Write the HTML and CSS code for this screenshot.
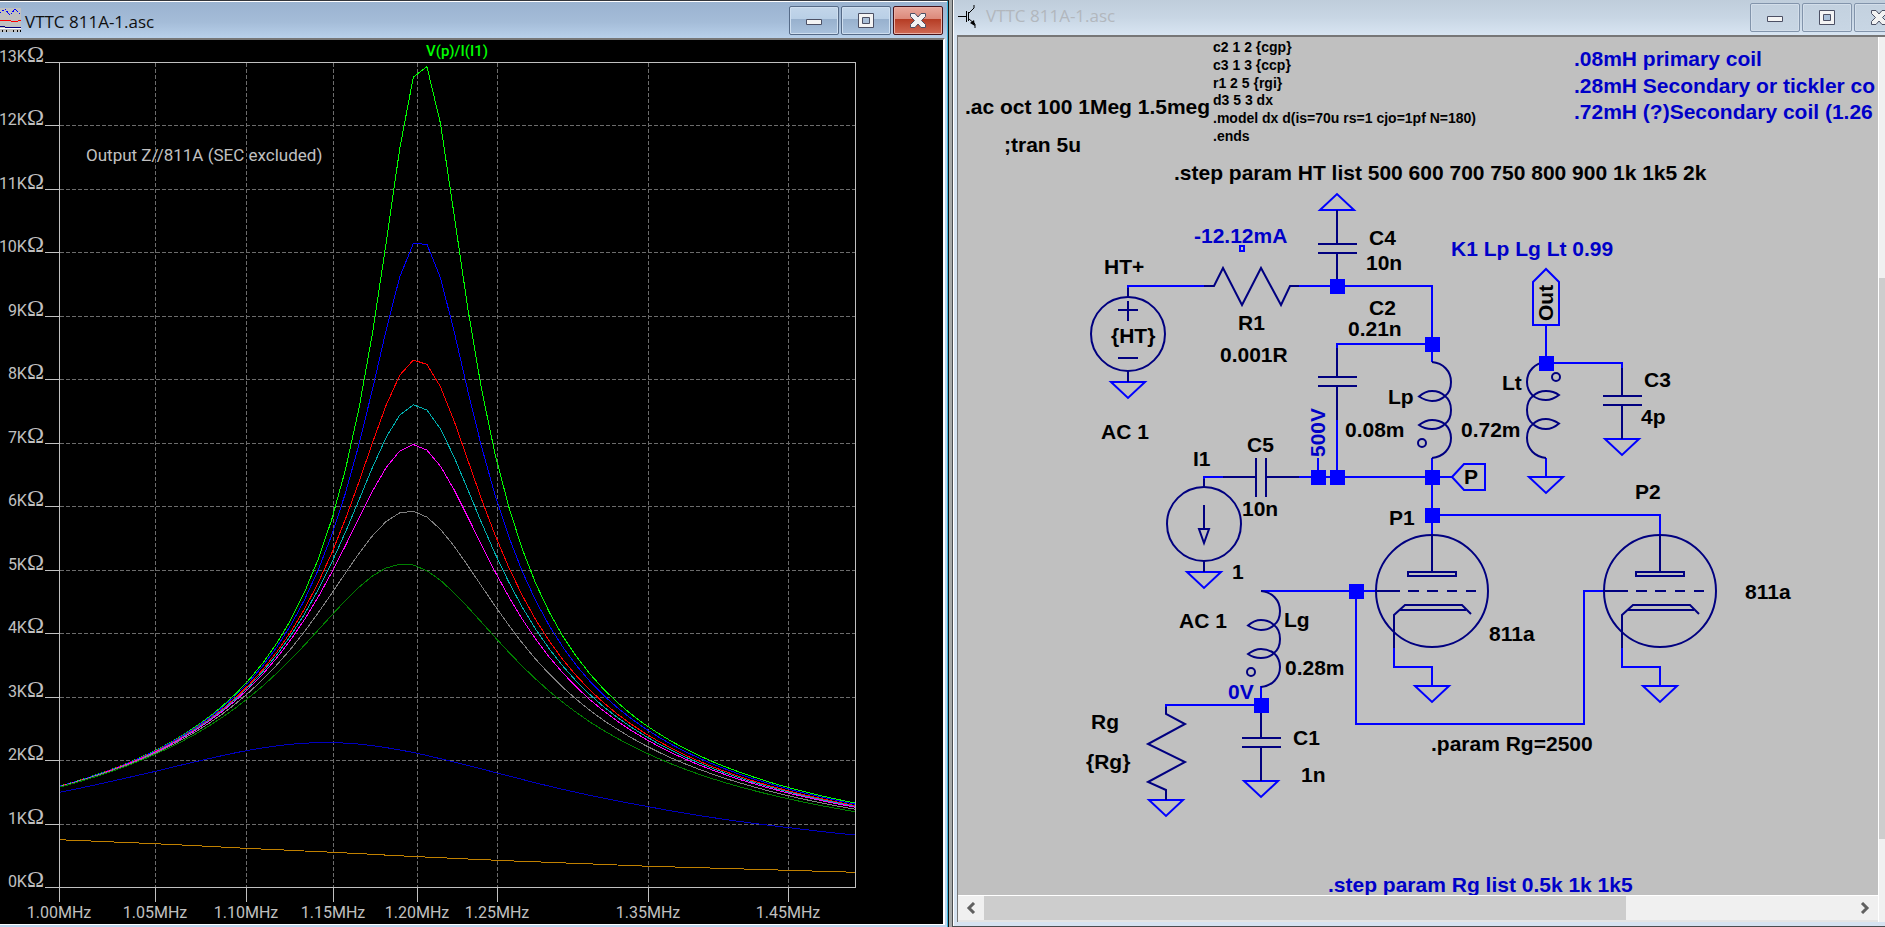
FILE: index.html
```html
<!DOCTYPE html>
<html lang="en">
<head>
  <meta charset="UTF-8" />
  <meta name="viewport" content="width=device-width, initial-scale=1.0" />
  <title>VTTC 811A-1.asc</title>
  <link rel="stylesheet" href="styles.css">
</head>
<body>
  <section class="window plot-window">
    <header class="title-bar">
      <svg class="title-icon" viewBox="0 0 21 24" width="21" height="24" shape-rendering="crispEdges" aria-hidden="true">
        <rect width="21" height="24" fill="#c0c0c0"/>
        <path d="M0 5L5 1L10 7L15 1L20 6" fill="none" stroke="#00f" stroke-dasharray="2 1"/>
        <path d="M0 13L3 12L8 12L14 14L18 13L21 12" fill="none" stroke="#f00" stroke-width="1"/>
        <path d="M0 18.500H5M5 19.500H21" fill="none" stroke="#000080"/>
        <path d="M0 20.500H21" fill="none" stroke="#fff"/>
        <path d="M2.500 22V24M6.500 22V24M13.500 22V24M17.500 22V24M20.500 22V24" stroke="#000"/>
      </svg>
      <h1>VTTC 811A-1.asc</h1>
      <div class="controls">
        <button type="button" aria-label="Minimize"><svg><use href="#icon-min"/></svg></button>
        <button type="button" aria-label="Maximize"><svg><use href="#icon-max"/></svg></button>
        <button type="button" class="close" aria-label="Close"><svg><use href="#icon-close"/></svg></button>
      </div>
    </header>
    <div class="client">
      <svg class="plot" viewBox="0 40 943 884" preserveAspectRatio="xMinYMin meet">
        <g class="grid">
          <path d="M60 125.500H855M60 189.500H855M60 252.500H855M60 316.500H855M60 379.500H855M60 443.500H855M60 506.500H855M60 570.500H855M60 633.500H855M60 697.500H855M60 760.500H855M60 824.500H855"/>
          <path d="M155.500 63V887M246.500 63V887M333.500 63V887M417.500 63V887M497.500 63V887M648.500 63V887M788.500 63V887"/>
        </g>
        <g id="traces" class="traces"></g>
        <path class="axis" d="M59.500 62.500H855.500V887.500H59.500ZM45 62.500H59M45 125.500H59M45 189.500H59M45 252.500H59M45 316.500H59M45 379.500H59M45 443.500H59M45 506.500H59M45 570.500H59M45 633.500H59M45 697.500H59M45 760.500H59M45 824.500H59M45 887.500H59M59.500 888V902M155.500 888V902M246.500 888V902M333.500 888V902M417.500 888V902M497.500 888V902M648.500 888V902M788.500 888V902"/>
        <g class="y-labels">
          <text x="44" y="62">13K<tspan>Ω</tspan></text>
          <text x="44" y="125">12K<tspan>Ω</tspan></text>
          <text x="44" y="189">11K<tspan>Ω</tspan></text>
          <text x="44" y="252">10K<tspan>Ω</tspan></text>
          <text x="44" y="316">9K<tspan>Ω</tspan></text>
          <text x="44" y="379">8K<tspan>Ω</tspan></text>
          <text x="44" y="443">7K<tspan>Ω</tspan></text>
          <text x="44" y="506">6K<tspan>Ω</tspan></text>
          <text x="44" y="570">5K<tspan>Ω</tspan></text>
          <text x="44" y="633">4K<tspan>Ω</tspan></text>
          <text x="44" y="697">3K<tspan>Ω</tspan></text>
          <text x="44" y="760">2K<tspan>Ω</tspan></text>
          <text x="44" y="824">1K<tspan>Ω</tspan></text>
          <text x="44" y="887">0K<tspan>Ω</tspan></text>
        </g>
        <g class="x-labels">
          <text x="59" y="918">1.00MHz</text>
          <text x="155" y="918">1.05MHz</text>
          <text x="246" y="918">1.10MHz</text>
          <text x="333" y="918">1.15MHz</text>
          <text x="417" y="918">1.20MHz</text>
          <text x="497" y="918">1.25MHz</text>
          <text x="648" y="918">1.35MHz</text>
          <text x="788" y="918">1.45MHz</text>
        </g>
        <text class="trace-name" x="457" y="56">V(p)/I(I1)</text>
        <text class="note" x="86" y="161">Output Z//811A (SEC excluded)</text>
      </svg>
    </div>
  </section>

  <section class="window schematic-window">
    <header class="title-bar">
      <svg class="title-icon" viewBox="0 0 18 24" width="18" height="24" aria-hidden="true">
        <g fill="none" stroke="#000">
          <path d="M0 12.500H8M8.500 7V18" />
          <path d="M10.500 8V17M11 9L16 4V1M11 15L17 20V24"/>
        </g>
        <path d="M12 19L17 22L16 16Z"/>
      </svg>
      <h2>VTTC 811A-1.asc</h2>
      <div class="controls">
        <button type="button" aria-label="Minimize"><svg><use href="#icon-min"/></svg></button>
        <button type="button" aria-label="Maximize"><svg><use href="#icon-max"/></svg></button>
        <button type="button" aria-label="Close"><svg><use href="#icon-close"/></svg></button>
      </div>
    </header>
    <div class="client">
      <svg class="schematic" viewBox="958 37 920 858" preserveAspectRatio="xMinYMin meet">
        <defs>
          <path id="gnd" d="M-17 0H17L0 16Z"/>
          <path id="cap" d="M-19 0H20M-19 9H20"/>
          <rect id="node" x="-7" y="-7" width="15" height="15"/>
          <g id="coil">
            <path d="M0 0C11 1 19 9 19 20C19 27 17 31 13 34C9 38 4 39 0 39C-5 39 -9 37 -13 34.500C-9 31 -5 29 0 29C6 29 11 32 13 34C17 37 19 42 19 48C19 55 17 59 13 62C9 66 4 67 0 67C-5 67 -9 66 -13 63C-9 60 -5 58 0 58C6 58 10 60 13 62C17 66 19 70 19 76C19 87 11 95 0 96"/>
            <circle cx="-10" cy="81" r="4"/>
          </g>
          <!-- triode, origin at the centre of the envelope -->
          <g id="triode">
            <circle r="56"/>
            <path d="M0 -57V-19M-24 -19H24V-15H-24ZM-56 0H-32M-24 0H-13M-5 0H6M15 0H25M34 0H44"/>
            <path d="M-38 57V24L-27 14H30L39 23M-33 19H34"/>
          </g>
        </defs>

        <g class="wire">
          <path d="M1128 290V286H1204M1299 286H1432V362M1432 344H1337V350M1337 420V477"/>
          <path d="M1204 480V477H1223M1299 477H1452M1318 458V477M1432 458V534M1432 515H1660V534"/>
          <path d="M1546 325V363H1622V370M1546 458V477"/>
          <path d="M1261 591H1376M1356 591V724H1584V591H1604"/>
          <path d="M1394 647V667H1432V686M1622 647V667H1660V686"/>
          <path d="M1261 686V705H1166V708"/>
          <path d="M1533 325V282L1546 269L1559 282V325Z"/>
          <path d="M1452 477L1464 464H1485V490H1464Z"/>
          <rect x="1240" y="246" width="4" height="5"/>
          <use href="#gnd" x="1128" y="382"/>
          <use href="#gnd" x="1204" y="572"/>
          <use href="#gnd" x="1622" y="439"/>
          <use href="#gnd" x="1546" y="477"/>
          <use href="#gnd" x="1432" y="686"/>
          <use href="#gnd" x="1660" y="686"/>
          <use href="#gnd" x="1166" y="800"/>
          <use href="#gnd" x="1261" y="781"/>
          <use href="#gnd" transform="translate(1337 210) rotate(180)"/>
        </g>

        <g class="part">
          <!-- HT source -->
          <circle cx="1128" cy="334" r="37"/>
          <path d="M1128 288V297M1128 371V382M1118 310H1138M1128 301V321M1118 358H1138"/>
          <!-- R1 -->
          <path d="M1204 286H1214L1223 268L1242 305L1261 268L1281 305L1290 286H1299"/>
          <!-- capacitors -->
          <use href="#cap" x="1337" y="244"/>
          <path d="M1337 210V244M1337 253V286"/>
          <use href="#cap" x="1337" y="377"/>
          <path d="M1337 348V377M1337 386V420"/>
          <use href="#cap" x="1622" y="396"/>
          <path d="M1622 368V396M1622 405V439"/>
          <use href="#cap" x="1261" y="738"/>
          <path d="M1261 705V738M1261 747V781"/>
          <path d="M1223 477H1256M1256 458V497M1266 458V497M1266 477H1299"/>
          <!-- I1 -->
          <circle cx="1204" cy="524" r="37"/>
          <path d="M1204 479V487M1204 561V572M1204 505V529M1199 529H1209L1204 543Z"/>
          <!-- Rg -->
          <path d="M1166 707V714L1185 724L1148 744L1185 762L1148 782L1166 790V800"/>
          <use href="#coil" x="1432" y="362"/>
          <use href="#coil" x="1261" y="591"/>
          <use href="#coil" transform="translate(1546 458) rotate(180)"/>
          <use href="#triode" x="1432" y="591"/>
          <use href="#triode" x="1660" y="591"/>
        </g>

        <g class="nodes">
          <use href="#node" x="1337" y="286"/>
          <use href="#node" x="1432" y="344"/>
          <use href="#node" x="1318" y="477"/>
          <use href="#node" x="1337" y="477"/>
          <use href="#node" x="1432" y="477"/>
          <use href="#node" x="1432" y="515"/>
          <use href="#node" x="1546" y="363"/>
          <use href="#node" x="1356" y="591"/>
          <use href="#node" x="1261" y="705"/>
        </g>

        <g class="model">
          <text x="1213" y="52">c2 1 2 {cgp}</text>
          <text x="1213" y="70">c3 1 3 {ccp}</text>
          <text x="1213" y="88">r1 2 5 {rgi}</text>
          <text x="1213" y="105">d3 5 3 dx</text>
          <text x="1213" y="123">.model dx d(is=70u rs=1 cjo=1pf N=180)</text>
          <text x="1213" y="141">.ends</text>
        </g>
        <g class="label">
          <text x="965" y="114">.ac oct 100 1Meg 1.5meg</text>
          <text x="1004" y="152">;tran 5u</text>
          <text x="1174" y="180">.step param HT list 500 600 700 750 800 900 1k 1k5 2k</text>
          <text x="1104" y="274">HT+</text>
          <text x="1111" y="343">{HT}</text>
          <text x="1101" y="439">AC 1</text>
          <text x="1238" y="330">R1</text>
          <text x="1220" y="362">0.001R</text>
          <text x="1369" y="245">C4</text>
          <text x="1366" y="270">10n</text>
          <text x="1369" y="315">C2</text>
          <text x="1348" y="336">0.21n</text>
          <text x="1388" y="404">Lp</text>
          <text x="1345" y="437">0.08m</text>
          <text x="1461" y="437">0.72m</text>
          <text x="1502" y="390">Lt</text>
          <text x="1644" y="387">C3</text>
          <text x="1641" y="424">4p</text>
          <text x="1193" y="466">I1</text>
          <text x="1247" y="452">C5</text>
          <text x="1242" y="516">10n</text>
          <text x="1232" y="579">1</text>
          <text x="1179" y="628">AC 1</text>
          <text x="1284" y="627">Lg</text>
          <text x="1285" y="675">0.28m</text>
          <text x="1389" y="525">P1</text>
          <text x="1635" y="499">P2</text>
          <text x="1489" y="641">811a</text>
          <text x="1745" y="599">811a</text>
          <text x="1091" y="729">Rg</text>
          <text x="1086" y="769">{Rg}</text>
          <text x="1293" y="745">C1</text>
          <text x="1301" y="782">1n</text>
          <text x="1431" y="751">.param Rg=2500</text>
          <text x="1464" y="484">P</text>
          <text transform="translate(1553 321) rotate(-90)">Out</text>
        </g>
        <g class="label comment">
          <text x="1574" y="66">.08mH primary coil</text>
          <text x="1574" y="93">.28mH Secondary or tickler co</text>
          <text x="1574" y="119">.72mH (?)Secondary coil (1.26</text>
          <text x="1451" y="256">K1 Lp Lg Lt 0.99</text>
          <text x="1194" y="243">-12.12mA</text>
          <text x="1228" y="699">0V</text>
          <text x="1328" y="892">.step param Rg list 0.5k 1k 1k5</text>
          <text transform="translate(1325 457) rotate(-90)">500V</text>
        </g>
      </svg>
      <div class="v-scroll"><div class="thumb"></div></div>
      <div class="h-scroll">
        <button type="button" aria-label="Scroll left"><svg viewBox="0 0 10 12"><path d="M8 1L3 6L8 11"/></svg></button>
        <div class="track"><div class="thumb"></div></div>
        <button type="button" aria-label="Scroll right"><svg viewBox="0 0 10 12"><path d="M2 1L7 6L2 11"/></svg></button>
      </div>
      <div class="corner"></div>
    </div>
  </section>

  <!-- button glyphs shared by both windows -->
  <svg class="defs" width="0" height="0" aria-hidden="true">
    <symbol id="icon-min" viewBox="0 0 20 20">
      <path d="M2.500 8.500H17.500V13.500H2.500Z" fill="#f4f4f4" stroke="#4c5064" stroke-linejoin="round"/>
    </symbol>
    <symbol id="icon-max" viewBox="0 0 20 20">
      <path d="M2.500 2.500H17.500V16.500H2.500Z" fill="#f4f4f4" stroke="#4c5064" stroke-linejoin="round"/>
      <path d="M6.500 6.500H13.500V12.500H6.500Z" fill="#a9bfd8" stroke="#4c5064"/>
    </symbol>
    <symbol id="icon-close" viewBox="0 0 20 20">
      <path d="M2.500 2.500H7L10 6L13 2.500H17.500V5.500L13.500 9.500L17.500 13.500V16.500H13L10 13L7 16.500H2.500V13.500L6.500 9.500L2.500 5.500Z" fill="#f2f2f2" stroke="#4c5064" stroke-linejoin="round"/>
    </symbol>
  </svg>

  <script src="plot.js"></script>
</body>
</html>
```

FILE: styles.css
```css
* {
  box-sizing: border-box;
}
html {
  overflow: hidden;
}
/* the schematic window runs past the right edge of the screen */
body {
  display: grid;
  grid-template-columns: minmax(0, 949fr) minmax(0, 958fr);
  column-gap: 3px;
  height: 100vh;
  margin: 0 -25px 0 0;
  background: #a6a9a9;
  font-family: "Open Sans", "Noto Sans", sans-serif;
}
.defs {
  position: absolute;
}
.window {
  display: flex;
  flex-direction: column;
  min-width: 0;
  min-height: 0;
  height: 100vh;
}
.title-bar {
  display: flex;
  flex: none;
}
.title-bar h1,
.title-bar h2 {
  flex: 1;
  margin: 0;
  font-size: 17px;
  font-weight: 400;
  line-height: 24px;
  white-space: nowrap;
}
.controls {
  display: flex;
  gap: 2px;
}
.controls button {
  display: flex;
  align-items: center;
  justify-content: center;
  width: 50px;
  height: 29px;
  padding: 0;
  border: 1px solid #566b88;
  border-radius: 2px;
  background: linear-gradient(#c3d6ea, #b9cfe6 43%, #97b0cd 44%, #a9c1dc);
  box-shadow: inset 0 0 0 1px #cfdff0;
}
.controls svg {
  width: 20px;
  height: 20px;
}
.controls .close {
  border-color: #47131a;
  background: linear-gradient(#e8a99d, #dc8a7b 43%, #b53b23 44%, #cf6a55);
  box-shadow: inset 0 0 0 1px #e9b0a6;
}
.client {
  flex: 1;
  min-height: 0;
}

/* waveform window */
.plot-window {
  border-top: 1px solid #33363c;
  border-right: 1px solid #101010;
  background: #bdd4ec;
  box-shadow: inset -1px 0 #38b4dc, inset 0 1px #fff;
  padding: 1px 2px 2px 0;
}
.plot-window .title-bar {
  height: 36px;
  padding: 4px 4px 0 0;
  margin-right: -1px;
  background: linear-gradient(#9ab3d0, #a4bcd8 55%, #b8d0ea);
}
.plot-window .title-icon {
  margin: 2px 4px 0 0;
}
.plot-window h1 {
  margin-top: 4px;
  color: #101010;
}
.plot-window .client {
  margin-right: 1px;
  border-top: 2px solid #777;
  border-right: 2px solid #fff;
  border-bottom: 1px solid #fff;
  background: #000;
}
.plot,
.schematic {
  display: block;
  width: 100%;
  height: 100%;
}
.plot text {
  font-family: Roboto, sans-serif;
  font-size: 16px;
  fill: #c0c0c0;
}
.plot path,
.plot polyline {
  fill: none;
  stroke-width: 1px;
  shape-rendering: crispEdges;
}
.plot .grid {
  stroke: #6c6c6c;
  stroke-dasharray: 4 2;
}
.axis {
  stroke: #c0c0c0;
}
.y-labels {
  text-anchor: end;
}
.y-labels tspan {
  font-family: "Liberation Serif", serif;
  font-size: 23px;
}
.x-labels,
.trace-name {
  text-anchor: middle;
}
.plot .trace-name {
  font-size: 15px;
  font-weight: 500;
  fill: #0f0;
}
.plot .note {
  font-size: 17px;
}

/* schematic window */
.schematic-window {
  padding: 0 5px 4px 4px;
  border-left: 1px solid #4a4d50;
  border-bottom: 1px solid #4a4d50;
  background: #d6e3f1;
  box-shadow: inset 1px 0 #fff;
}
.schematic-window .title-bar {
  height: 35px;
  margin: 0 -5px 0 -3px;
  padding: 3px 6px 0 4px;
  background: linear-gradient(#bfcddb, #c8d6e4 50%, #d8e5f2);
}
.schematic-window .title-icon {
  margin: 1px 10px 0 0;
}
.schematic-window h2 {
  margin-top: 1px;
  color: #b2b7bd;
}
.schematic-window .controls button {
  border-color: #8294ab;
  background: linear-gradient(#c3d1df, #c8d6e4);
  box-shadow: inset 0 0 0 1px #d3deea;
}
.schematic-window .client {
  display: grid;
  grid-template-columns: minmax(0, 1fr) 27px;
  grid-template-rows: minmax(0, 1fr) 27px;
  border-top: 2px solid #777;
  border-left: 1px solid #777;
  background: #c0c0c0;
}
.wire,
.part {
  fill: none;
  stroke-width: 2px;
}
.wire {
  stroke: #00f;
}
.part {
  stroke: #000080;
}
.nodes {
  fill: #00f;
}
.label,
.model {
  font-family: "Liberation Sans", Arial, sans-serif;
  font-size: 21px;
  font-weight: 700;
}
.model {
  font-size: 14px;
}
.comment {
  fill: #0000c8;
}
.v-scroll,
.corner {
  border-left: 1px solid #fff;
  background: #f0f0f0;
}
.v-scroll {
  padding-top: 241px;
}
.v-scroll .thumb {
  height: 91%;
  background: #cdcdcd;
}
.h-scroll {
  display: flex;
  border-top: 1px solid #fff;
  border-bottom: 2px solid #e4e4e4;
  background: #f0f0f0;
}
.h-scroll button {
  width: 26px;
  padding: 0;
  border: 0;
  background: #f0f0f0;
}
.h-scroll svg {
  display: block;
  width: 10px;
  height: 12px;
  margin: auto;
  fill: none;
  stroke: #606060;
  stroke-width: 3px;
}
.h-scroll .track {
  flex: 1;
}
.h-scroll .thumb {
  width: 74%;
  height: 100%;
  background: #cdcdcd;
}
```

FILE: plot.js
```js
// Plate impedance of the tank, .ac oct 100 1Meg 1.5meg
const F0 = 1.205;   // MHz
const X0 = 600;     // ohm

// tube conductance against frequency, relative to 1.2MHz
const SHAPE = [
  [1.0, 0.49], [1.05, 0.622], [1.1, 0.74], [1.146, 0.855], [1.2, 1],
  [1.25, 1.144], [1.35, 1.455], [1.45, 1.819], [1.5, 2.031]
];

// impedance of the run in which the tube is fully on
const LOADED = [
  [1.0, 753], [1.05, 690], [1.1, 617], [1.15, 554], [1.2, 485],
  [1.25, 428], [1.35, 334], [1.45, 271], [1.5, 239]
];

// conductance at 1.2MHz in uS, one per step
const RUNS = [
  { g: 76, color: '#00ff00' },
  { g: 97, color: '#0000ff' },
  { g: 119.3, color: '#ff0000' },
  { g: 130.7, color: '#00b0b0' },
  { g: 142.7, color: '#ff00ff' },
  { g: 168.5, color: '#808080' },
  { g: 197, color: '#008000' },
  { g: 472.7, color: '#0000c0' }
];

function lerp(table, f) {
  let i = 1;
  while (i < table.length - 1 && table[i][0] < f) i++;
  const [x0, y0] = table[i - 1];
  const [x1, y1] = table[i];
  return y0 + (y1 - y0) * (f - x0) / (x1 - x0);
}

function tank(g, f) {
  const b = (f / F0 - F0 / f) / X0;
  return 1 / Math.hypot(g * 1e-6 * lerp(SHAPE, f), b);
}

function draw(color, z) {
  const points = [];
  for (let i = 0; i <= 59; i++) {
    const f = Math.min(Math.pow(2, i / 100), 1.5);
    const x = 59.5 + 796 * Math.log(f) / Math.log(1.5);
    const y = 887.5 - z(f) * 825 / 13000;
    points.push(x.toFixed(1) + ',' + y.toFixed(1));
  }
  const line = document.createElementNS('http://www.w3.org/2000/svg', 'polyline');
  line.setAttribute('points', points.join(' '));
  line.setAttribute('stroke', color);
  document.getElementById('traces').appendChild(line);
}

RUNS.forEach(run => draw(run.color, f => tank(run.g, f)));
draw('#c08000', f => lerp(LOADED, f));
```
